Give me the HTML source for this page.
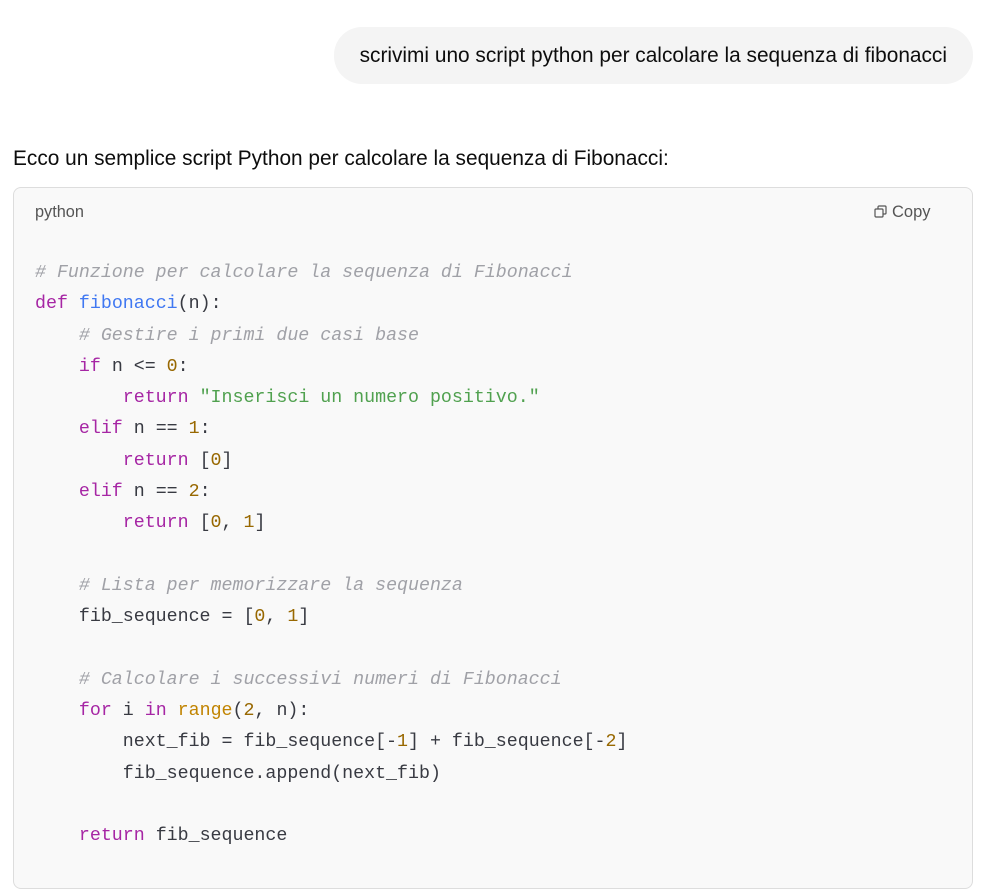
<!DOCTYPE html>
<html><head><meta charset="utf-8"><style>
body{margin:0;background:#fff;font-family:"Liberation Sans",sans-serif;color:#0d0d0d;width:986px;height:866px;overflow:hidden;position:relative}
.bubble{position:absolute;right:13px;top:27px;height:57px;background:#f4f4f4;border-radius:28px;padding:0 26px;font-size:20.85px;line-height:58px;}
.intro{position:absolute;left:13px;top:145px;font-size:20.85px;line-height:28px}
.code{position:absolute;left:13px;top:187px;width:958px;height:700px;border:1px solid #ddd;border-radius:8px;background:#f9f9f9}
.lang{position:absolute;left:21px;top:15px;font-size:16.3px;color:#555}
.copy{position:absolute;left:860px;top:15px;font-size:16.5px;color:#555}
pre{position:absolute;left:21px;top:70px;margin:0;font-family:"Liberation Mono",monospace;font-size:18.3px;line-height:31.3px;color:#383a42}
.c{color:#a0a1a7;font-style:italic}.k{color:#a626a4}.f{color:#4078f2}.n{color:#986801}.s{color:#50a14f}.b{color:#c18401}
</style></head><body>
<div class="bubble">scrivimi uno script python per calcolare la sequenza di fibonacci</div>
<div class="intro">Ecco un semplice script Python per calcolare la sequenza di Fibonacci:</div>
<div class="code">
<div class="lang">python</div>
<div class="copy"><svg width="13" height="13" viewBox="0 0 13 13" style="vertical-align:-1px;margin-right:5px" fill="none" stroke="#555" stroke-width="1.2"><rect x="1" y="4" width="8" height="8" rx="1"/><path d="M4 4V2a1 1 0 0 1 1-1h6a1 1 0 0 1 1 1v6a1 1 0 0 1-1 1H9"/></svg>Copy</div>
<pre><span class="c"># Funzione per calcolare la sequenza di Fibonacci</span>
<span class="k">def</span> <span class="f">fibonacci</span>(n):
    <span class="c"># Gestire i primi due casi base</span>
    <span class="k">if</span> n &lt;= <span class="n">0</span>:
        <span class="k">return</span> <span class="s">"Inserisci un numero positivo."</span>
    <span class="k">elif</span> n == <span class="n">1</span>:
        <span class="k">return</span> [<span class="n">0</span>]
    <span class="k">elif</span> n == <span class="n">2</span>:
        <span class="k">return</span> [<span class="n">0</span>, <span class="n">1</span>]

    <span class="c"># Lista per memorizzare la sequenza</span>
    fib_sequence = [<span class="n">0</span>, <span class="n">1</span>]

    <span class="c"># Calcolare i successivi numeri di Fibonacci</span>
    <span class="k">for</span> i <span class="k">in</span> <span class="b">range</span>(<span class="n">2</span>, n):
        next_fib = fib_sequence[-<span class="n">1</span>] + fib_sequence[-<span class="n">2</span>]
        fib_sequence.append(next_fib)

    <span class="k">return</span> fib_sequence</pre>
</div>
</body></html>
